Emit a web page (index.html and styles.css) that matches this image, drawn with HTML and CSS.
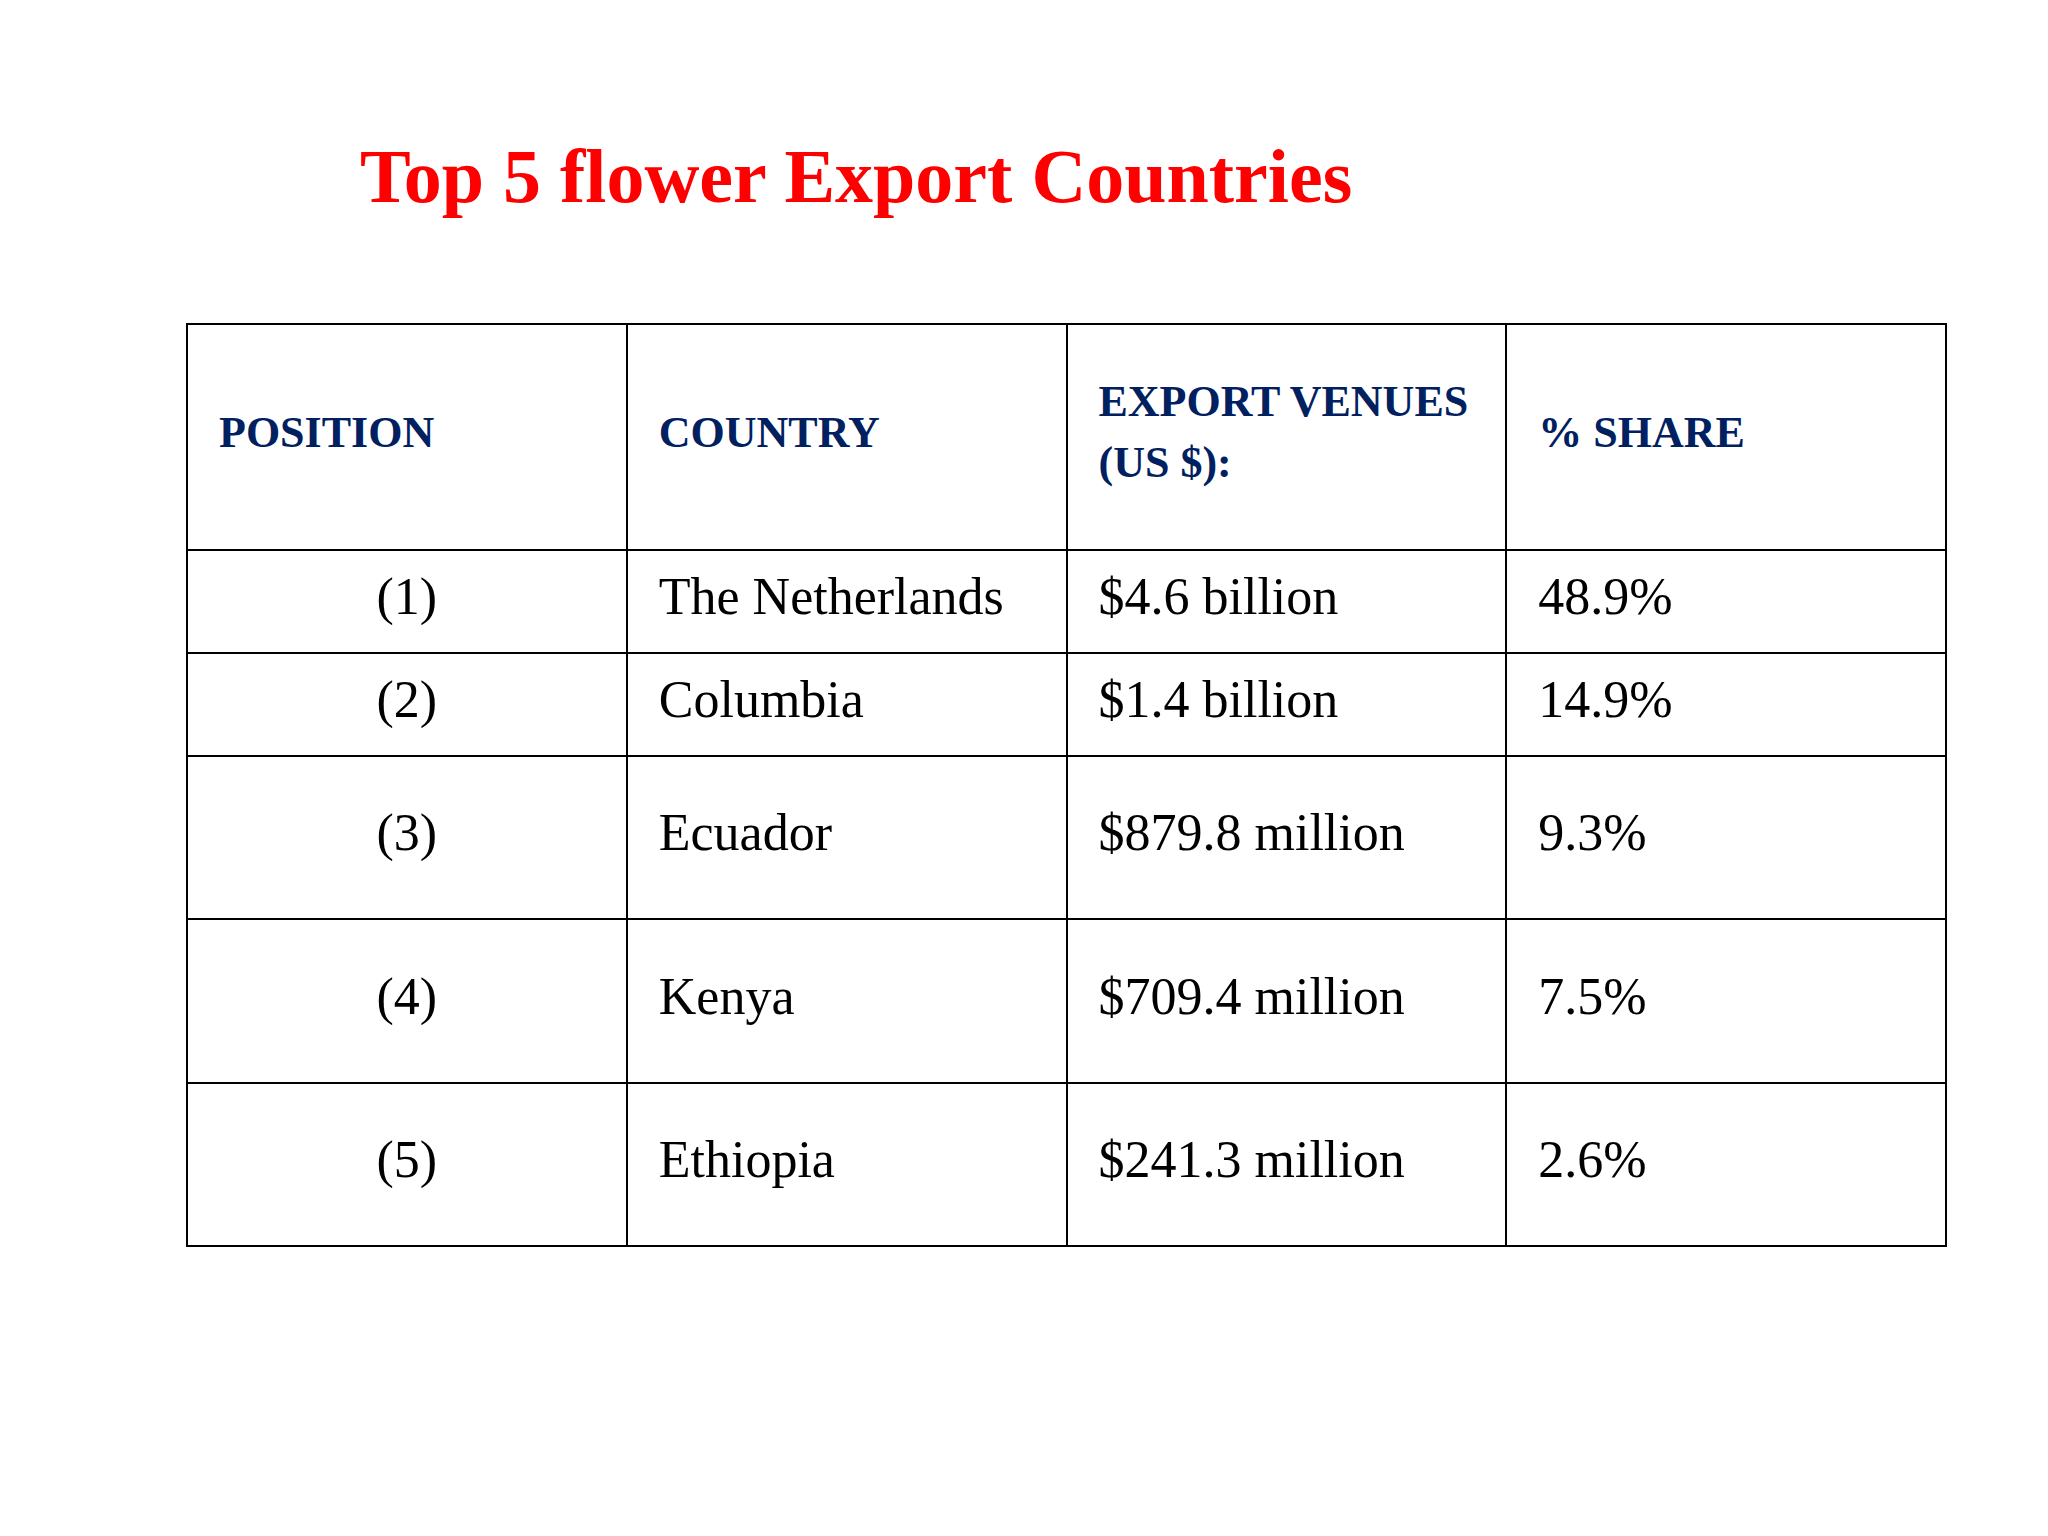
FILE: index.html
```html
<!DOCTYPE html>
<html lang="en">
<head>
<meta charset="utf-8">
<title>Top 5 flower Export Countries</title>
<link rel="stylesheet" href="styles.css">
</head>
<body>
<main class="slide">
  <h1 class="title">Top 5 flower Export Countries</h1>
  <div class="grid" role="table">
    <div class="cell head">POSITION</div>
    <div class="cell head">COUNTRY</div>
    <div class="cell head">EXPORT VENUES<br>(US $):</div>
    <div class="cell head">% SHARE</div>

    <div class="cell pos">(1)</div>
    <div class="cell">The Netherlands</div>
    <div class="cell">$4.6 billion</div>
    <div class="cell">48.9%</div>

    <div class="cell pos">(2)</div>
    <div class="cell">Columbia</div>
    <div class="cell">$1.4 billion</div>
    <div class="cell">14.9%</div>

    <div class="cell pos">(3)</div>
    <div class="cell">Ecuador</div>
    <div class="cell">$879.8 million</div>
    <div class="cell">9.3%</div>

    <div class="cell pos">(4)</div>
    <div class="cell">Kenya</div>
    <div class="cell">$709.4 million</div>
    <div class="cell">7.5%</div>

    <div class="cell pos">(5)</div>
    <div class="cell">Ethiopia</div>
    <div class="cell">$241.3 million</div>
    <div class="cell">2.6%</div>
  </div>
</main>
</body>
</html>
```
FILE: styles.css
```css
html, body {
  margin: 0;
  padding: 0;
  background: #ffffff;
}

.slide {
  width: 2048px;
  height: 1536px;
  padding-top: 132px;
  box-sizing: border-box;
  font-family: "Liberation Serif", "Times New Roman", serif;
}

.title {
  margin: 0 0 0 360px;
  font-size: 76px;
  line-height: 88px;
  font-weight: bold;
  color: #ff0000;
}

.grid {
  margin: 103px 0 0 186px;
  width: 1761px;
  display: grid;
  grid-template-columns: repeat(4, 439.75px);
  grid-template-rows: 226px 103px 103px 163px 164px 163px;
  border-left: 2px solid #000;
  border-top: 2px solid #000;
  box-sizing: border-box;
}

.cell {
  box-sizing: border-box;
  border-right: 2px solid #000;
  border-bottom: 2px solid #000;
  display: flex;
  align-items: center;
  padding: 0 0 10px 31px;
  font-size: 52px;
  color: #000;
}

.head {
  font-size: 44px;
  line-height: 61px;
  font-weight: bold;
  color: #002060;
}

.pos {
  justify-content: center;
  padding-left: 0;
}
```
